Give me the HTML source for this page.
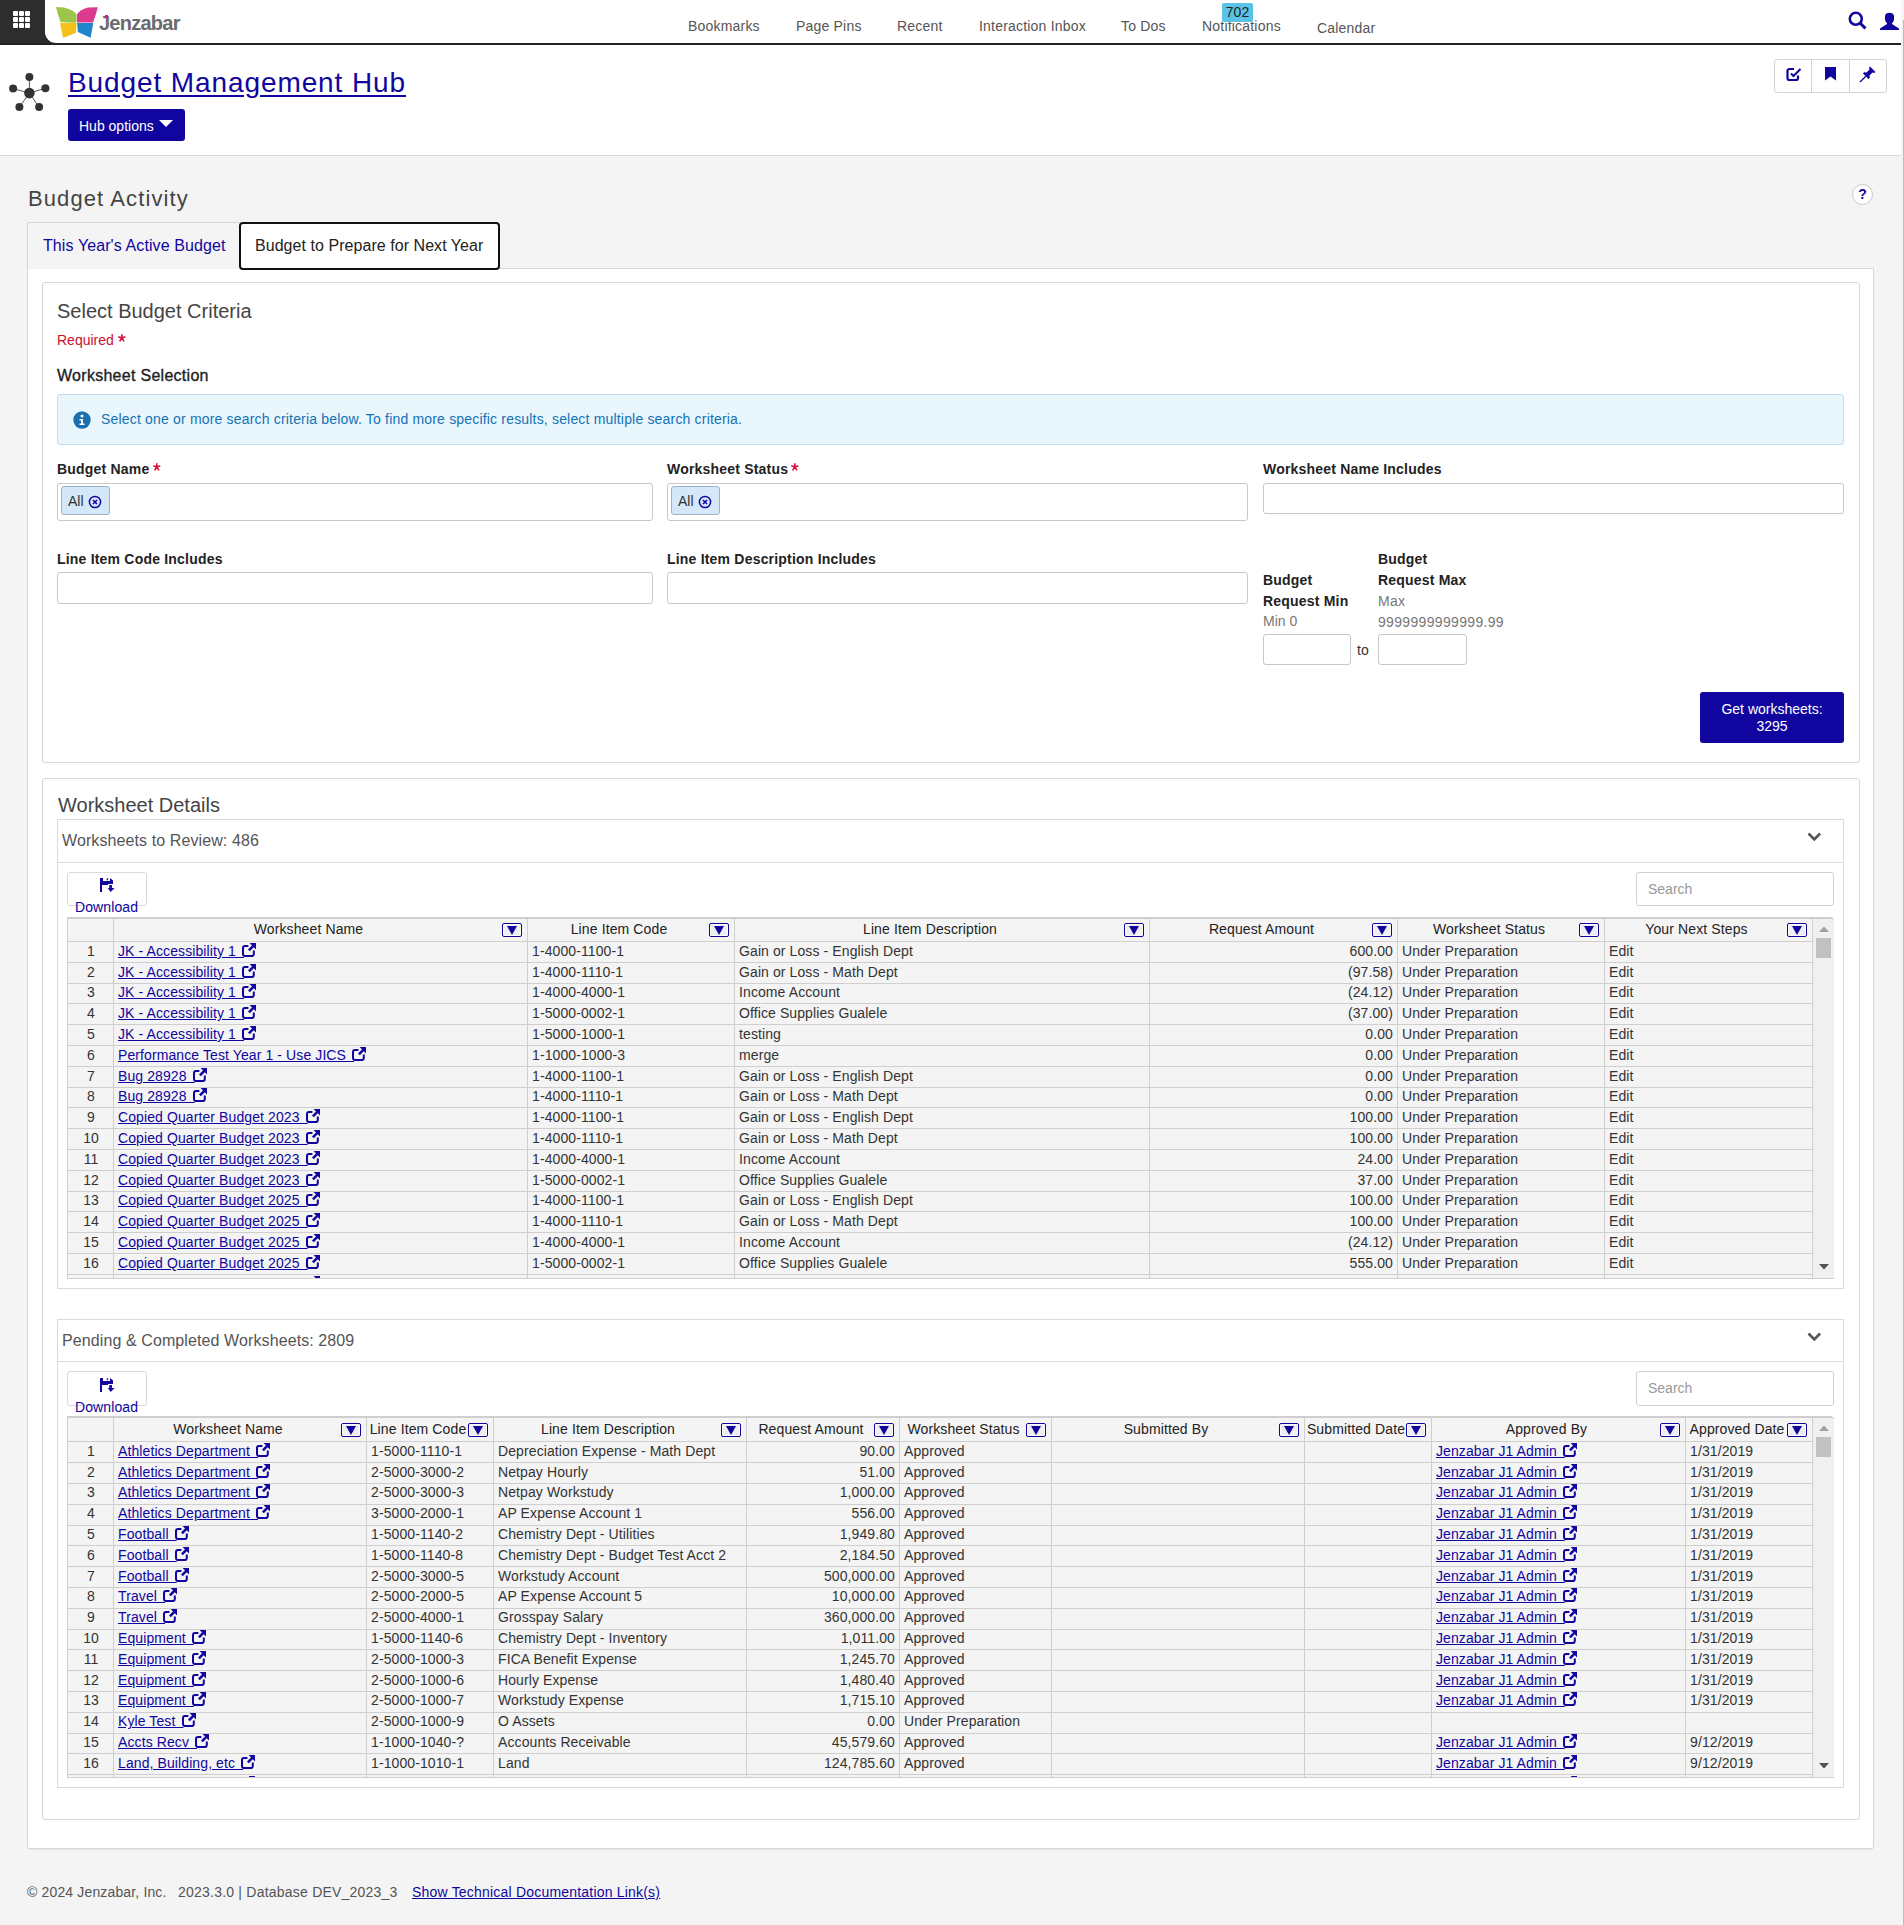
<!DOCTYPE html>
<html><head><meta charset="utf-8">
<style>
*{box-sizing:border-box}
html,body{margin:0;padding:0}
body{width:1904px;height:1925px;overflow:hidden;background:#f4f4f4;font-family:"Liberation Sans",sans-serif;font-size:14px;color:#222;position:relative}
.abs{position:absolute}
a{color:#10069f}
/* header */
#hdr{position:absolute;left:0;top:0;width:1901px;height:45px;background:#fff;border-bottom:2px solid #222}
#grid{position:absolute;left:0;top:0;width:56px;height:43px;background:#2d2d2d}
#gridw{position:absolute;left:45px;top:0;width:14px;height:43px;background:#fff;border-bottom-left-radius:11px}
#grid i{position:absolute;width:5px;height:5px;background:#fff;border-radius:1px}
.nav{position:absolute;top:18px;font-size:14px;color:#555;white-space:nowrap;letter-spacing:0.2px}
#hub{position:absolute;left:0;top:45px;width:1901px;height:111px;background:#fff;border-bottom:1px solid #d9d9d9}
.geo{font-family:"Liberation Sans",sans-serif}
.btn{background:#10069f;color:#fff;border-radius:3px}
.panel{position:absolute;background:#fff;border:1px solid #d6d6d6;border-radius:3px}
.lbl{position:absolute;font-weight:bold;font-size:14px;color:#222;white-space:nowrap;letter-spacing:0.2px}
.req{color:#c8102e}
.inp{position:absolute;background:#fff;border:1px solid #c8c8c8;border-radius:3px}
.chip{position:absolute;left:3px;top:2px;width:49px;height:29px;background:#d5e8fa;border:1px solid #9db3c9;border-radius:3px}
.gray{color:#777}
.sub{position:absolute;background:#fff;border:1px solid #dcdcdc}
.subhb{position:absolute;height:1px;background:#dcdcdc}
.subt{position:absolute;font-size:16px;color:#555;white-space:nowrap;letter-spacing:0.1px}
.dl{position:absolute;width:80px;height:34px;border:1px solid #d9d9d9;border-radius:3px;background:#fff}
.dlt{position:absolute;font-size:14px;color:#10069f;white-space:nowrap;letter-spacing:0.1px}
.srch{position:absolute;width:198px;height:34px;border:1px solid #d0d0d0;border-radius:3px;background:#fff;color:#999;font-size:14px;line-height:32px;padding-left:11px}
.grid{position:absolute;background:#f4f4f4;border-top:2px solid #cfcfcf;border-bottom:1px solid #cfcfcf;border-left:1px solid #cfcfcf;overflow:hidden;border-top-right-radius:4px}
.vl{position:absolute;top:0;bottom:0;width:1px;background:#cfcfcf}
.hl{position:absolute;left:0;right:21px;height:1px;background:#cfcfcf}
.hc{position:absolute;top:0;height:23px;line-height:23px;text-align:center;white-space:nowrap;color:#222;font-size:14px;letter-spacing:0.12px}
.filt{position:relative;width:20px;height:14px;border:1px solid #10069f;border-radius:2px;background:#eee;box-shadow:inset 0 0 0 1px #fff}
.rn{position:absolute;left:0;height:20.8px;line-height:17px;text-align:center;color:#333}
.c{position:absolute;height:20.8px;line-height:17px;white-space:nowrap;overflow:visible;color:#333;letter-spacing:0.1px}
.c a{color:#10069f;text-decoration:underline}
.ext{vertical-align:top;margin-top:0px;margin-left:-1.9px}
.sb{position:absolute;top:0;bottom:0;background:#f0f0f0;border-right:1px solid #d6d6d6}
</style></head><body>

<!-- HEADER -->
<div id="hdr">
  <div id="grid">
    <i style="left:13px;top:11px"></i><i style="left:19px;top:11px"></i><i style="left:25px;top:11px"></i>
    <i style="left:13px;top:17px"></i><i style="left:19px;top:17px"></i><i style="left:25px;top:17px"></i>
    <i style="left:13px;top:23px"></i><i style="left:19px;top:23px"></i><i style="left:25px;top:23px"></i>
  </div>
  <div id="gridw"></div>
  <svg class="abs" style="left:56px;top:6px" width="42" height="33" viewBox="0 0 42 33">
    
    <path d="M0 1 L8 1.5 Q18 4 20.5 8.5 L20.5 16.7 L4.7 16.2 Q1.5 8 0 1Z" fill="#9cc64a"/>
    <path d="M41.8 1.2 L32 1.5 Q24 3.5 21 8.5 L21 16.5 L37 16.5 Q40 9 41.8 1.2Z" fill="#dc3a8e"/>
    <path d="M4 17 L20.5 17 L20 27 L7 31.7Z" fill="#f5c01a"/>
    <path d="M21.2 17 L37.3 17 L34.6 31.7 L21.8 26Z" fill="#1f86cc"/>
  </svg>
  <div class="abs" style="left:99px;top:12px;font-size:20px;font-weight:bold;color:#6b6b6e;letter-spacing:-0.75px;white-space:nowrap">Jenzabar</div>
  <div class="abs" style="left:105px;top:15px;width:3px;height:3px;background:#e8177f"></div>

  <div class="nav" style="left:688px">Bookmarks</div>
  <div class="nav" style="left:796px">Page Pins</div>
  <div class="nav" style="left:897px">Recent</div>
  <div class="nav" style="left:979px">Interaction Inbox</div>
  <div class="nav" style="left:1121px">To Dos</div>
  <div class="nav" style="left:1202px">Notifications</div>
  <div class="abs" style="left:1222px;top:3px;width:31px;height:19px;background:#5bc2e7;border-radius:2px;font-size:14px;color:#222;text-align:center;line-height:19px">702</div>
  <div class="nav" style="left:1317px;top:20px">Calendar</div>

  <svg class="abs" style="left:1848px;top:11px" width="20" height="20" viewBox="0 0 20 20">
    <circle cx="7.8" cy="7.8" r="6" fill="none" stroke="#10069f" stroke-width="2.6"/>
    <path d="M12 12 L17.5 17.5" stroke="#10069f" stroke-width="3" stroke-linecap="butt"/>
  </svg>
  <svg class="abs" style="left:1879px;top:11px" width="21" height="20" viewBox="0 0 21 20">
    <path d="M6 5 C6 0.5 15 0.5 15 5 L15 8 C15 10 14 11.5 13 12 L13 13 L20 17.5 L20 19 L1 19 L1 17.5 L8 13 L8 12 C7 11.5 6 10 6 8Z" fill="#10069f"/>
  </svg>
</div>
<div class="abs" style="left:1903px;top:20px;width:1px;height:1905px;background:#bbb"></div>

<!-- HUB -->
<div id="hub">
  <svg class="abs" style="left:5px;top:23px" width="50" height="46" viewBox="0 0 50 46">
    <g stroke="#444" stroke-width="0.9">
      <line x1="24.4" y1="25.1" x2="24.4" y2="8.9"/><line x1="24.4" y1="25.1" x2="8.1" y2="20.5"/><line x1="24.4" y1="25.1" x2="40.4" y2="20.2"/>
      <line x1="24.4" y1="25.1" x2="14.4" y2="39.1"/><line x1="24.4" y1="25.1" x2="34.1" y2="39.1"/>
    </g>
    <g fill="#333"><circle cx="24.4" cy="25.1" r="5.3"/><circle cx="24.4" cy="8.9" r="4"/><circle cx="8.1" cy="20.5" r="4"/><circle cx="40.4" cy="20.2" r="4"/><circle cx="14.4" cy="39.1" r="4"/><circle cx="34.1" cy="39.1" r="4"/></g>
  </svg>
  <a class="abs geo" style="left:68px;top:22px;font-size:28px;letter-spacing:0.9px;white-space:nowrap;color:#10069f;text-decoration:underline;text-underline-offset:3px">Budget Management Hub</a>
  <div class="abs btn" style="left:68px;top:64px;width:117px;height:32px;font-size:14px;line-height:34px;padding-left:11px">Hub options<svg style="position:absolute;left:91px;top:11px" width="14" height="8" viewBox="0 0 14 8"><path d="M0 0 L14 0 L7 7Z" fill="#fff"/></svg></div>
  <div class="abs" style="left:1774px;top:14px;width:113px;height:34px;border:1px solid #d4d4d4;border-radius:3px;background:#fff"></div>
  <div class="abs" style="left:1811px;top:15px;width:1px;height:32px;background:#d4d4d4"></div>
  <div class="abs" style="left:1849px;top:15px;width:1px;height:32px;background:#d4d4d4"></div>
  <svg class="abs" style="left:1786px;top:22px" width="16" height="15" viewBox="0 0 16 15">
    <path d="M8 2 L3.5 2 Q1.5 2 1.5 4 L1.5 11 Q1.5 13 3.5 13 L10 13 Q12 13 12 11 L12 8.5" fill="none" stroke="#10069f" stroke-width="2.2"/>
    <path d="M5 6.5 L7.5 9 L14.5 2" fill="none" stroke="#10069f" stroke-width="2"/>
  </svg>
  <svg class="abs" style="left:1825px;top:22px" width="12" height="14" viewBox="0 0 12 14"><path d="M0 0 L11 0 L11 13.5 L5.5 9.5 L0 13.5Z" fill="#10069f"/></svg>
  <svg class="abs" style="left:1859px;top:21px" width="17" height="17" viewBox="0 0 17 17">
    <path d="M11 0.5 L16.5 6 L15 7 L13.5 6.5 L10.5 9.5 L10.8 12 L9.5 13 L4 7.5 L5 6.2 L7.5 6.5 L10.5 3.5 L10 2Z" fill="#10069f"/>
    <path d="M6.8 10.2 L1 16" stroke="#10069f" stroke-width="1.3"/>
  </svg>
</div>

<!-- BUDGET ACTIVITY -->
<div class="abs geo" style="left:28px;top:186px;font-size:22px;letter-spacing:1.1px;color:#444;white-space:nowrap">Budget Activity</div>
<div class="abs" style="left:1852px;top:184px;width:21px;height:21px;border:1px solid #c8c8c8;border-radius:50%;background:#fff;text-align:center;font-weight:bold;font-size:14px;line-height:19px;color:#10069f">?</div>

<!-- tab container -->
<div class="abs" style="left:27px;top:268px;width:1847px;height:1581px;background:#fff;border:1px solid #d6d6d6;border-bottom-left-radius:3px;border-bottom-right-radius:3px;box-shadow:0 1px 1px rgba(0,0,0,0.05)"></div>
<div class="abs" style="left:27px;top:222px;width:213px;height:47px;background:#f4f4f4;border:1px solid #d6d6d6;border-bottom:none;border-right-color:#e4e4e4;border-top-left-radius:3px"></div>
<div class="abs" style="left:43px;top:237px;font-size:16px;color:#10069f;white-space:nowrap;letter-spacing:0.1px">This Year's Active Budget</div>
<div class="abs" style="left:239px;top:222px;width:261px;height:48px;border:2px solid #111;border-radius:4px;background:#fff"></div>
<div class="abs" style="left:255px;top:237px;font-size:16px;color:#222;white-space:nowrap;letter-spacing:0.05px">Budget to Prepare for Next Year</div>

<!-- CRITERIA PANEL -->
<div class="panel" style="left:42px;top:282px;width:1818px;height:481px"></div>
<div class="abs geo" style="left:57px;top:300px;font-size:20px;color:#444;white-space:nowrap">Select Budget Criteria</div>
<div class="abs" style="left:57px;top:332px;font-size:14px;color:#c8102e;white-space:nowrap">Required</div><svg class="abs" style="left:118px;top:334px" width="8" height="8" viewBox="0 0 8 8"><path d="M3.8 4 V0.2 M3.8 3.9 L0.3 2.7 M3.8 3.9 L7.3 2.7 M3.8 3.9 L1.6 7.4 M3.8 3.9 L6 7.4" stroke="#d60f3c" stroke-width="1.6"/></svg>
<div class="abs geo" style="left:57px;top:367px;font-size:16px;color:#222;white-space:nowrap;letter-spacing:0.28px;-webkit-text-stroke:0.35px #222">Worksheet Selection</div>
<div class="abs" style="left:57px;top:394px;width:1787px;height:51px;background:#e9f6fc;border:1px solid #bfe0ef;border-radius:3px"></div>
<svg class="abs" style="left:73px;top:411px" width="18" height="18" viewBox="0 0 18 18"><circle cx="9" cy="9" r="8.7" fill="#1b6fae"/><circle cx="9" cy="5" r="1.5" fill="#fff"/><path d="M6.5 8 L10 8 L10 12.5 L11.5 12.5 L11.5 14 L6.5 14 L6.5 12.5 L8 12.5 L8 9.5 L6.5 9.5Z" fill="#fff"/></svg>
<div class="abs" style="left:101px;top:411px;font-size:14px;color:#1272b6;white-space:nowrap;letter-spacing:0.18px">Select one or more search criteria below. To find more specific results, select multiple search criteria.</div>

<div class="lbl" style="left:57px;top:461px">Budget Name</div><svg class="abs" style="left:152.5px;top:463px" width="8" height="8" viewBox="0 0 8 8"><path d="M3.8 4 V0.2 M3.8 3.9 L0.3 2.7 M3.8 3.9 L7.3 2.7 M3.8 3.9 L1.6 7.4 M3.8 3.9 L6 7.4" stroke="#d60f3c" stroke-width="1.6"/></svg>
<div class="inp" style="left:57px;top:483px;width:596px;height:38px"><div class="chip"><span class="abs" style="left:6px;top:6px;color:#333">All</span><svg class="abs" style="left:26px;top:8px" width="14" height="14" viewBox="0 0 14 14"><circle cx="7" cy="7" r="5.6" fill="none" stroke="#10069f" stroke-width="1.5"/><path d="M5 5 L9 9 M9 5 L5 9" stroke="#10069f" stroke-width="1.6"/></svg></div></div>
<div class="lbl" style="left:667px;top:461px">Worksheet Status</div><svg class="abs" style="left:791px;top:463px" width="8" height="8" viewBox="0 0 8 8"><path d="M3.8 4 V0.2 M3.8 3.9 L0.3 2.7 M3.8 3.9 L7.3 2.7 M3.8 3.9 L1.6 7.4 M3.8 3.9 L6 7.4" stroke="#d60f3c" stroke-width="1.6"/></svg>
<div class="inp" style="left:667px;top:483px;width:581px;height:38px"><div class="chip"><span class="abs" style="left:6px;top:6px;color:#333">All</span><svg class="abs" style="left:26px;top:8px" width="14" height="14" viewBox="0 0 14 14"><circle cx="7" cy="7" r="5.6" fill="none" stroke="#10069f" stroke-width="1.5"/><path d="M5 5 L9 9 M9 5 L5 9" stroke="#10069f" stroke-width="1.6"/></svg></div></div>
<div class="lbl" style="left:1263px;top:461px">Worksheet Name Includes</div>
<div class="inp" style="left:1263px;top:483px;width:581px;height:31px"></div>

<div class="lbl" style="left:57px;top:551px">Line Item Code Includes</div>
<div class="inp" style="left:57px;top:572px;width:596px;height:32px"></div>
<div class="lbl" style="left:667px;top:551px">Line Item Description Includes</div>
<div class="inp" style="left:667px;top:572px;width:581px;height:32px"></div>

<div class="lbl" style="left:1263px;top:570px;line-height:20.7px">Budget<br>Request Min</div>
<div class="abs gray" style="left:1263px;top:613px;white-space:nowrap">Min 0</div>
<div class="lbl" style="left:1378px;top:549px;line-height:20.7px">Budget<br>Request Max</div>
<div class="abs gray" style="left:1378px;top:591px;line-height:20.7px;white-space:nowrap;letter-spacing:0.33px">Max<br>9999999999999.99</div>
<div class="inp" style="left:1263px;top:634px;width:88px;height:31px"></div>
<div class="abs" style="left:1357px;top:642px;color:#333">to</div>
<div class="inp" style="left:1378px;top:634px;width:89px;height:31px"></div>

<div class="abs btn" style="left:1700px;top:692px;width:144px;height:51px;text-align:center;line-height:17px;padding-top:9px">Get worksheets:<br>3295</div>

<!-- DETAILS PANEL -->
<div class="panel" style="left:42px;top:778px;width:1818px;height:1042px"></div>
<div class="abs geo" style="left:58px;top:794px;font-size:20px;color:#444;white-space:nowrap">Worksheet Details</div>

<!--TABLE1-->
<div class="sub" style="left:57px;top:819px;width:1787px;height:470px"></div>
<div class="subhb" style="left:58px;top:862px;width:1785px"></div>
<div class="subt" style="left:62px;top:832px">Worksheets to Review: 486</div>
<svg style="position:absolute;left:1807px;top:832px" width="15" height="10" viewBox="0 0 15 10"><path d="M1.5 1.5 L7.3 7.3 L13.1 1.5" fill="none" stroke="#555" stroke-width="2.6"/></svg>
<div class="dl" style="left:67px;top:872px;height:34px"></div>
<svg style="position:absolute;left:100px;top:878px" width="15" height="15" viewBox="0 0 15 15"><path d="M0 0 H3 V3 H10 V0 L13 2.5 V6 H8 V7 H2 V14 H0Z" fill="#10069f"/><rect x="6.8" y="0.3" width="1.3" height="2" fill="#10069f"/><path d="M9.3 7 H11.9 V10 H14.7 L10.6 14 L7.8 10 H9.3Z" fill="#10069f"/></svg>
<div class="dlt" style="left:75px;top:899px">Download</div>
<div class="srch" style="left:1636px;top:872px;height:34px">Search</div>
<div class="grid" style="left:67px;top:917px;width:1767px;height:362px">
<div class="vl" style="left:45px"></div>
<div class="vl" style="left:459px"></div>
<div class="vl" style="left:666px"></div>
<div class="vl" style="left:1081px"></div>
<div class="vl" style="left:1329px"></div>
<div class="vl" style="left:1536px"></div>
<div class="vl" style="left:1744px"></div>
<div class="hl" style="top:22.0px"></div>
<div class="hl" style="top:42.8px"></div>
<div class="hl" style="top:63.6px"></div>
<div class="hl" style="top:84.4px"></div>
<div class="hl" style="top:105.2px"></div>
<div class="hl" style="top:126.0px"></div>
<div class="hl" style="top:146.8px"></div>
<div class="hl" style="top:167.6px"></div>
<div class="hl" style="top:188.4px"></div>
<div class="hl" style="top:209.2px"></div>
<div class="hl" style="top:230.0px"></div>
<div class="hl" style="top:250.8px"></div>
<div class="hl" style="top:271.6px"></div>
<div class="hl" style="top:292.4px"></div>
<div class="hl" style="top:313.2px"></div>
<div class="hl" style="top:334.0px"></div>
<div class="hl" style="top:354.8px"></div>
<div class="hc" style="top:-1px;left:46px;width:389px;height:22.0px;line-height:22.0px">Worksheet Name</div>
<div style="position:absolute;left:434px;top:3.7px"><div class="filt"><svg width="10" height="9" viewBox="0 0 10 9" style="position:absolute;left:4px;top:2px"><path d="M0 0 H10 L5 9Z" fill="#10069f"/></svg></div></div>
<div class="hc" style="top:-1px;left:460px;width:182px;height:22.0px;line-height:22.0px">Line Item Code</div>
<div style="position:absolute;left:641px;top:3.7px"><div class="filt"><svg width="10" height="9" viewBox="0 0 10 9" style="position:absolute;left:4px;top:2px"><path d="M0 0 H10 L5 9Z" fill="#10069f"/></svg></div></div>
<div class="hc" style="top:-1px;left:667px;width:390px;height:22.0px;line-height:22.0px">Line Item Description</div>
<div style="position:absolute;left:1056px;top:3.7px"><div class="filt"><svg width="10" height="9" viewBox="0 0 10 9" style="position:absolute;left:4px;top:2px"><path d="M0 0 H10 L5 9Z" fill="#10069f"/></svg></div></div>
<div class="hc" style="top:-1px;left:1082px;width:223px;height:22.0px;line-height:22.0px">Request Amount</div>
<div style="position:absolute;left:1304px;top:3.7px"><div class="filt"><svg width="10" height="9" viewBox="0 0 10 9" style="position:absolute;left:4px;top:2px"><path d="M0 0 H10 L5 9Z" fill="#10069f"/></svg></div></div>
<div class="hc" style="top:-1px;left:1330px;width:182px;height:22.0px;line-height:22.0px">Worksheet Status</div>
<div style="position:absolute;left:1511px;top:3.7px"><div class="filt"><svg width="10" height="9" viewBox="0 0 10 9" style="position:absolute;left:4px;top:2px"><path d="M0 0 H10 L5 9Z" fill="#10069f"/></svg></div></div>
<div class="hc" style="top:-1px;left:1537px;width:183px;height:22.0px;line-height:22.0px">Your Next Steps</div>
<div style="position:absolute;left:1719px;top:3.7px"><div class="filt"><svg width="10" height="9" viewBox="0 0 10 9" style="position:absolute;left:4px;top:2px"><path d="M0 0 H10 L5 9Z" fill="#10069f"/></svg></div></div>
<div class="rn" style="top:23.8px;width:46px">1</div>
<div class="c" style="top:23.8px;left:50px;width:409px"><a>JK - Accessibility 1&nbsp; </a><svg class="ext" width="14" height="14" viewBox="0 0 14 14"><path d="M6.4 2.9 H3 Q1 2.9 1 4.9 V11.1 Q1 13.1 3 13.1 H9.8 Q11.8 13.1 11.8 11.1 V7.6" fill="none" stroke="#10069f" stroke-width="2"/><path d="M6.9 7.3 L11.6 2.6" stroke="#10069f" stroke-width="2.6"/><path d="M7.6 0 H14 V6.4Z" fill="#10069f"/></svg></div>
<div class="c" style="top:23.8px;left:464px;width:202px">1-4000-1100-1</div>
<div class="c" style="top:23.8px;left:671px;width:410px">Gain or Loss - English Dept</div>
<div class="c" style="top:23.8px;left:1082px;width:243px;text-align:right">600.00</div>
<div class="c" style="top:23.8px;left:1334px;width:202px">Under Preparation</div>
<div class="c" style="top:23.8px;left:1541px;width:203px">Edit</div>
<div class="rn" style="top:44.6px;width:46px">2</div>
<div class="c" style="top:44.6px;left:50px;width:409px"><a>JK - Accessibility 1&nbsp; </a><svg class="ext" width="14" height="14" viewBox="0 0 14 14"><path d="M6.4 2.9 H3 Q1 2.9 1 4.9 V11.1 Q1 13.1 3 13.1 H9.8 Q11.8 13.1 11.8 11.1 V7.6" fill="none" stroke="#10069f" stroke-width="2"/><path d="M6.9 7.3 L11.6 2.6" stroke="#10069f" stroke-width="2.6"/><path d="M7.6 0 H14 V6.4Z" fill="#10069f"/></svg></div>
<div class="c" style="top:44.6px;left:464px;width:202px">1-4000-1110-1</div>
<div class="c" style="top:44.6px;left:671px;width:410px">Gain or Loss - Math Dept</div>
<div class="c" style="top:44.6px;left:1082px;width:243px;text-align:right">(97.58)</div>
<div class="c" style="top:44.6px;left:1334px;width:202px">Under Preparation</div>
<div class="c" style="top:44.6px;left:1541px;width:203px">Edit</div>
<div class="rn" style="top:65.4px;width:46px">3</div>
<div class="c" style="top:65.4px;left:50px;width:409px"><a>JK - Accessibility 1&nbsp; </a><svg class="ext" width="14" height="14" viewBox="0 0 14 14"><path d="M6.4 2.9 H3 Q1 2.9 1 4.9 V11.1 Q1 13.1 3 13.1 H9.8 Q11.8 13.1 11.8 11.1 V7.6" fill="none" stroke="#10069f" stroke-width="2"/><path d="M6.9 7.3 L11.6 2.6" stroke="#10069f" stroke-width="2.6"/><path d="M7.6 0 H14 V6.4Z" fill="#10069f"/></svg></div>
<div class="c" style="top:65.4px;left:464px;width:202px">1-4000-4000-1</div>
<div class="c" style="top:65.4px;left:671px;width:410px">Income Account</div>
<div class="c" style="top:65.4px;left:1082px;width:243px;text-align:right">(24.12)</div>
<div class="c" style="top:65.4px;left:1334px;width:202px">Under Preparation</div>
<div class="c" style="top:65.4px;left:1541px;width:203px">Edit</div>
<div class="rn" style="top:86.2px;width:46px">4</div>
<div class="c" style="top:86.2px;left:50px;width:409px"><a>JK - Accessibility 1&nbsp; </a><svg class="ext" width="14" height="14" viewBox="0 0 14 14"><path d="M6.4 2.9 H3 Q1 2.9 1 4.9 V11.1 Q1 13.1 3 13.1 H9.8 Q11.8 13.1 11.8 11.1 V7.6" fill="none" stroke="#10069f" stroke-width="2"/><path d="M6.9 7.3 L11.6 2.6" stroke="#10069f" stroke-width="2.6"/><path d="M7.6 0 H14 V6.4Z" fill="#10069f"/></svg></div>
<div class="c" style="top:86.2px;left:464px;width:202px">1-5000-0002-1</div>
<div class="c" style="top:86.2px;left:671px;width:410px">Office Supplies Gualele</div>
<div class="c" style="top:86.2px;left:1082px;width:243px;text-align:right">(37.00)</div>
<div class="c" style="top:86.2px;left:1334px;width:202px">Under Preparation</div>
<div class="c" style="top:86.2px;left:1541px;width:203px">Edit</div>
<div class="rn" style="top:107.0px;width:46px">5</div>
<div class="c" style="top:107.0px;left:50px;width:409px"><a>JK - Accessibility 1&nbsp; </a><svg class="ext" width="14" height="14" viewBox="0 0 14 14"><path d="M6.4 2.9 H3 Q1 2.9 1 4.9 V11.1 Q1 13.1 3 13.1 H9.8 Q11.8 13.1 11.8 11.1 V7.6" fill="none" stroke="#10069f" stroke-width="2"/><path d="M6.9 7.3 L11.6 2.6" stroke="#10069f" stroke-width="2.6"/><path d="M7.6 0 H14 V6.4Z" fill="#10069f"/></svg></div>
<div class="c" style="top:107.0px;left:464px;width:202px">1-5000-1000-1</div>
<div class="c" style="top:107.0px;left:671px;width:410px">testing</div>
<div class="c" style="top:107.0px;left:1082px;width:243px;text-align:right">0.00</div>
<div class="c" style="top:107.0px;left:1334px;width:202px">Under Preparation</div>
<div class="c" style="top:107.0px;left:1541px;width:203px">Edit</div>
<div class="rn" style="top:127.8px;width:46px">6</div>
<div class="c" style="top:127.8px;left:50px;width:409px"><a>Performance Test Year 1 - Use JICS&nbsp; </a><svg class="ext" width="14" height="14" viewBox="0 0 14 14"><path d="M6.4 2.9 H3 Q1 2.9 1 4.9 V11.1 Q1 13.1 3 13.1 H9.8 Q11.8 13.1 11.8 11.1 V7.6" fill="none" stroke="#10069f" stroke-width="2"/><path d="M6.9 7.3 L11.6 2.6" stroke="#10069f" stroke-width="2.6"/><path d="M7.6 0 H14 V6.4Z" fill="#10069f"/></svg></div>
<div class="c" style="top:127.8px;left:464px;width:202px">1-1000-1000-3</div>
<div class="c" style="top:127.8px;left:671px;width:410px">merge</div>
<div class="c" style="top:127.8px;left:1082px;width:243px;text-align:right">0.00</div>
<div class="c" style="top:127.8px;left:1334px;width:202px">Under Preparation</div>
<div class="c" style="top:127.8px;left:1541px;width:203px">Edit</div>
<div class="rn" style="top:148.6px;width:46px">7</div>
<div class="c" style="top:148.6px;left:50px;width:409px"><a>Bug 28928&nbsp; </a><svg class="ext" width="14" height="14" viewBox="0 0 14 14"><path d="M6.4 2.9 H3 Q1 2.9 1 4.9 V11.1 Q1 13.1 3 13.1 H9.8 Q11.8 13.1 11.8 11.1 V7.6" fill="none" stroke="#10069f" stroke-width="2"/><path d="M6.9 7.3 L11.6 2.6" stroke="#10069f" stroke-width="2.6"/><path d="M7.6 0 H14 V6.4Z" fill="#10069f"/></svg></div>
<div class="c" style="top:148.6px;left:464px;width:202px">1-4000-1100-1</div>
<div class="c" style="top:148.6px;left:671px;width:410px">Gain or Loss - English Dept</div>
<div class="c" style="top:148.6px;left:1082px;width:243px;text-align:right">0.00</div>
<div class="c" style="top:148.6px;left:1334px;width:202px">Under Preparation</div>
<div class="c" style="top:148.6px;left:1541px;width:203px">Edit</div>
<div class="rn" style="top:169.4px;width:46px">8</div>
<div class="c" style="top:169.4px;left:50px;width:409px"><a>Bug 28928&nbsp; </a><svg class="ext" width="14" height="14" viewBox="0 0 14 14"><path d="M6.4 2.9 H3 Q1 2.9 1 4.9 V11.1 Q1 13.1 3 13.1 H9.8 Q11.8 13.1 11.8 11.1 V7.6" fill="none" stroke="#10069f" stroke-width="2"/><path d="M6.9 7.3 L11.6 2.6" stroke="#10069f" stroke-width="2.6"/><path d="M7.6 0 H14 V6.4Z" fill="#10069f"/></svg></div>
<div class="c" style="top:169.4px;left:464px;width:202px">1-4000-1110-1</div>
<div class="c" style="top:169.4px;left:671px;width:410px">Gain or Loss - Math Dept</div>
<div class="c" style="top:169.4px;left:1082px;width:243px;text-align:right">0.00</div>
<div class="c" style="top:169.4px;left:1334px;width:202px">Under Preparation</div>
<div class="c" style="top:169.4px;left:1541px;width:203px">Edit</div>
<div class="rn" style="top:190.2px;width:46px">9</div>
<div class="c" style="top:190.2px;left:50px;width:409px"><a>Copied Quarter Budget 2023&nbsp; </a><svg class="ext" width="14" height="14" viewBox="0 0 14 14"><path d="M6.4 2.9 H3 Q1 2.9 1 4.9 V11.1 Q1 13.1 3 13.1 H9.8 Q11.8 13.1 11.8 11.1 V7.6" fill="none" stroke="#10069f" stroke-width="2"/><path d="M6.9 7.3 L11.6 2.6" stroke="#10069f" stroke-width="2.6"/><path d="M7.6 0 H14 V6.4Z" fill="#10069f"/></svg></div>
<div class="c" style="top:190.2px;left:464px;width:202px">1-4000-1100-1</div>
<div class="c" style="top:190.2px;left:671px;width:410px">Gain or Loss - English Dept</div>
<div class="c" style="top:190.2px;left:1082px;width:243px;text-align:right">100.00</div>
<div class="c" style="top:190.2px;left:1334px;width:202px">Under Preparation</div>
<div class="c" style="top:190.2px;left:1541px;width:203px">Edit</div>
<div class="rn" style="top:211.0px;width:46px">10</div>
<div class="c" style="top:211.0px;left:50px;width:409px"><a>Copied Quarter Budget 2023&nbsp; </a><svg class="ext" width="14" height="14" viewBox="0 0 14 14"><path d="M6.4 2.9 H3 Q1 2.9 1 4.9 V11.1 Q1 13.1 3 13.1 H9.8 Q11.8 13.1 11.8 11.1 V7.6" fill="none" stroke="#10069f" stroke-width="2"/><path d="M6.9 7.3 L11.6 2.6" stroke="#10069f" stroke-width="2.6"/><path d="M7.6 0 H14 V6.4Z" fill="#10069f"/></svg></div>
<div class="c" style="top:211.0px;left:464px;width:202px">1-4000-1110-1</div>
<div class="c" style="top:211.0px;left:671px;width:410px">Gain or Loss - Math Dept</div>
<div class="c" style="top:211.0px;left:1082px;width:243px;text-align:right">100.00</div>
<div class="c" style="top:211.0px;left:1334px;width:202px">Under Preparation</div>
<div class="c" style="top:211.0px;left:1541px;width:203px">Edit</div>
<div class="rn" style="top:231.8px;width:46px">11</div>
<div class="c" style="top:231.8px;left:50px;width:409px"><a>Copied Quarter Budget 2023&nbsp; </a><svg class="ext" width="14" height="14" viewBox="0 0 14 14"><path d="M6.4 2.9 H3 Q1 2.9 1 4.9 V11.1 Q1 13.1 3 13.1 H9.8 Q11.8 13.1 11.8 11.1 V7.6" fill="none" stroke="#10069f" stroke-width="2"/><path d="M6.9 7.3 L11.6 2.6" stroke="#10069f" stroke-width="2.6"/><path d="M7.6 0 H14 V6.4Z" fill="#10069f"/></svg></div>
<div class="c" style="top:231.8px;left:464px;width:202px">1-4000-4000-1</div>
<div class="c" style="top:231.8px;left:671px;width:410px">Income Account</div>
<div class="c" style="top:231.8px;left:1082px;width:243px;text-align:right">24.00</div>
<div class="c" style="top:231.8px;left:1334px;width:202px">Under Preparation</div>
<div class="c" style="top:231.8px;left:1541px;width:203px">Edit</div>
<div class="rn" style="top:252.6px;width:46px">12</div>
<div class="c" style="top:252.6px;left:50px;width:409px"><a>Copied Quarter Budget 2023&nbsp; </a><svg class="ext" width="14" height="14" viewBox="0 0 14 14"><path d="M6.4 2.9 H3 Q1 2.9 1 4.9 V11.1 Q1 13.1 3 13.1 H9.8 Q11.8 13.1 11.8 11.1 V7.6" fill="none" stroke="#10069f" stroke-width="2"/><path d="M6.9 7.3 L11.6 2.6" stroke="#10069f" stroke-width="2.6"/><path d="M7.6 0 H14 V6.4Z" fill="#10069f"/></svg></div>
<div class="c" style="top:252.6px;left:464px;width:202px">1-5000-0002-1</div>
<div class="c" style="top:252.6px;left:671px;width:410px">Office Supplies Gualele</div>
<div class="c" style="top:252.6px;left:1082px;width:243px;text-align:right">37.00</div>
<div class="c" style="top:252.6px;left:1334px;width:202px">Under Preparation</div>
<div class="c" style="top:252.6px;left:1541px;width:203px">Edit</div>
<div class="rn" style="top:273.4px;width:46px">13</div>
<div class="c" style="top:273.4px;left:50px;width:409px"><a>Copied Quarter Budget 2025&nbsp; </a><svg class="ext" width="14" height="14" viewBox="0 0 14 14"><path d="M6.4 2.9 H3 Q1 2.9 1 4.9 V11.1 Q1 13.1 3 13.1 H9.8 Q11.8 13.1 11.8 11.1 V7.6" fill="none" stroke="#10069f" stroke-width="2"/><path d="M6.9 7.3 L11.6 2.6" stroke="#10069f" stroke-width="2.6"/><path d="M7.6 0 H14 V6.4Z" fill="#10069f"/></svg></div>
<div class="c" style="top:273.4px;left:464px;width:202px">1-4000-1100-1</div>
<div class="c" style="top:273.4px;left:671px;width:410px">Gain or Loss - English Dept</div>
<div class="c" style="top:273.4px;left:1082px;width:243px;text-align:right">100.00</div>
<div class="c" style="top:273.4px;left:1334px;width:202px">Under Preparation</div>
<div class="c" style="top:273.4px;left:1541px;width:203px">Edit</div>
<div class="rn" style="top:294.2px;width:46px">14</div>
<div class="c" style="top:294.2px;left:50px;width:409px"><a>Copied Quarter Budget 2025&nbsp; </a><svg class="ext" width="14" height="14" viewBox="0 0 14 14"><path d="M6.4 2.9 H3 Q1 2.9 1 4.9 V11.1 Q1 13.1 3 13.1 H9.8 Q11.8 13.1 11.8 11.1 V7.6" fill="none" stroke="#10069f" stroke-width="2"/><path d="M6.9 7.3 L11.6 2.6" stroke="#10069f" stroke-width="2.6"/><path d="M7.6 0 H14 V6.4Z" fill="#10069f"/></svg></div>
<div class="c" style="top:294.2px;left:464px;width:202px">1-4000-1110-1</div>
<div class="c" style="top:294.2px;left:671px;width:410px">Gain or Loss - Math Dept</div>
<div class="c" style="top:294.2px;left:1082px;width:243px;text-align:right">100.00</div>
<div class="c" style="top:294.2px;left:1334px;width:202px">Under Preparation</div>
<div class="c" style="top:294.2px;left:1541px;width:203px">Edit</div>
<div class="rn" style="top:315.0px;width:46px">15</div>
<div class="c" style="top:315.0px;left:50px;width:409px"><a>Copied Quarter Budget 2025&nbsp; </a><svg class="ext" width="14" height="14" viewBox="0 0 14 14"><path d="M6.4 2.9 H3 Q1 2.9 1 4.9 V11.1 Q1 13.1 3 13.1 H9.8 Q11.8 13.1 11.8 11.1 V7.6" fill="none" stroke="#10069f" stroke-width="2"/><path d="M6.9 7.3 L11.6 2.6" stroke="#10069f" stroke-width="2.6"/><path d="M7.6 0 H14 V6.4Z" fill="#10069f"/></svg></div>
<div class="c" style="top:315.0px;left:464px;width:202px">1-4000-4000-1</div>
<div class="c" style="top:315.0px;left:671px;width:410px">Income Account</div>
<div class="c" style="top:315.0px;left:1082px;width:243px;text-align:right">(24.12)</div>
<div class="c" style="top:315.0px;left:1334px;width:202px">Under Preparation</div>
<div class="c" style="top:315.0px;left:1541px;width:203px">Edit</div>
<div class="rn" style="top:335.8px;width:46px">16</div>
<div class="c" style="top:335.8px;left:50px;width:409px"><a>Copied Quarter Budget 2025&nbsp; </a><svg class="ext" width="14" height="14" viewBox="0 0 14 14"><path d="M6.4 2.9 H3 Q1 2.9 1 4.9 V11.1 Q1 13.1 3 13.1 H9.8 Q11.8 13.1 11.8 11.1 V7.6" fill="none" stroke="#10069f" stroke-width="2"/><path d="M6.9 7.3 L11.6 2.6" stroke="#10069f" stroke-width="2.6"/><path d="M7.6 0 H14 V6.4Z" fill="#10069f"/></svg></div>
<div class="c" style="top:335.8px;left:464px;width:202px">1-5000-0002-1</div>
<div class="c" style="top:335.8px;left:671px;width:410px">Office Supplies Gualele</div>
<div class="c" style="top:335.8px;left:1082px;width:243px;text-align:right">555.00</div>
<div class="c" style="top:335.8px;left:1334px;width:202px">Under Preparation</div>
<div class="c" style="top:335.8px;left:1541px;width:203px">Edit</div>
<div class="rn" style="top:356.6px;width:46px"></div>
<div class="c" style="top:356.6px;left:50px;width:409px"><a>Copied Quarter Budget 2025&nbsp; </a><svg class="ext" width="14" height="14" viewBox="0 0 14 14"><path d="M6.4 2.9 H3 Q1 2.9 1 4.9 V11.1 Q1 13.1 3 13.1 H9.8 Q11.8 13.1 11.8 11.1 V7.6" fill="none" stroke="#10069f" stroke-width="2"/><path d="M6.9 7.3 L11.6 2.6" stroke="#10069f" stroke-width="2.6"/><path d="M7.6 0 H14 V6.4Z" fill="#10069f"/></svg></div>
<div class="c" style="top:356.6px;left:464px;width:202px">1-5000-1000-1</div>
<div class="c" style="top:356.6px;left:671px;width:410px">testing</div>
<div class="c" style="top:356.6px;left:1082px;width:243px;text-align:right">0.00</div>
<div class="c" style="top:356.6px;left:1334px;width:202px">Under Preparation</div>
<div class="c" style="top:356.6px;left:1541px;width:203px">Edit</div>
<div class="sb" style="left:1745px;width:22px"></div>
<svg style="position:absolute;left:1751px;top:7px" width="10" height="6" viewBox="0 0 10 6"><path d="M0 6 L5 0.5 L10 6Z" fill="#a0a0a0"/></svg>
<div style="position:absolute;left:1748px;top:19px;width:15px;height:20px;background:#c1c1c1"></div>
<svg style="position:absolute;left:1751px;top:345px" width="10" height="6" viewBox="0 0 10 6"><path d="M0 0 L10 0 L5 5.5Z" fill="#505050"/></svg>
</div>
<!--/TABLE1-->

<!--TABLE2-->
<div class="sub" style="left:57px;top:1319px;width:1787px;height:469px"></div>
<div class="subhb" style="left:58px;top:1361px;width:1785px"></div>
<div class="subt" style="left:62px;top:1332px">Pending &amp; Completed Worksheets: 2809</div>
<svg style="position:absolute;left:1807px;top:1332px" width="15" height="10" viewBox="0 0 15 10"><path d="M1.5 1.5 L7.3 7.3 L13.1 1.5" fill="none" stroke="#555" stroke-width="2.6"/></svg>
<div class="dl" style="left:67px;top:1371px;height:35px"></div>
<svg style="position:absolute;left:100px;top:1378px" width="15" height="15" viewBox="0 0 15 15"><path d="M0 0 H3 V3 H10 V0 L13 2.5 V6 H8 V7 H2 V14 H0Z" fill="#10069f"/><rect x="6.8" y="0.3" width="1.3" height="2" fill="#10069f"/><path d="M9.3 7 H11.9 V10 H14.7 L10.6 14 L7.8 10 H9.3Z" fill="#10069f"/></svg>
<div class="dlt" style="left:75px;top:1399px">Download</div>
<div class="srch" style="left:1636px;top:1371px;height:35px">Search</div>
<div class="grid" style="left:67px;top:1416px;width:1767px;height:362px">
<div class="vl" style="left:45px"></div>
<div class="vl" style="left:298px"></div>
<div class="vl" style="left:425px"></div>
<div class="vl" style="left:678px"></div>
<div class="vl" style="left:831px"></div>
<div class="vl" style="left:983px"></div>
<div class="vl" style="left:1236px"></div>
<div class="vl" style="left:1363px"></div>
<div class="vl" style="left:1617px"></div>
<div class="vl" style="left:1744px"></div>
<div class="hl" style="top:23.3px"></div>
<div class="hl" style="top:44.1px"></div>
<div class="hl" style="top:64.9px"></div>
<div class="hl" style="top:85.7px"></div>
<div class="hl" style="top:106.5px"></div>
<div class="hl" style="top:127.3px"></div>
<div class="hl" style="top:148.1px"></div>
<div class="hl" style="top:168.9px"></div>
<div class="hl" style="top:189.7px"></div>
<div class="hl" style="top:210.5px"></div>
<div class="hl" style="top:231.3px"></div>
<div class="hl" style="top:252.1px"></div>
<div class="hl" style="top:272.9px"></div>
<div class="hl" style="top:293.7px"></div>
<div class="hl" style="top:314.5px"></div>
<div class="hl" style="top:335.3px"></div>
<div class="hl" style="top:356.1px"></div>
<div class="hc" style="top:0px;left:46px;width:228px;height:23.3px;line-height:23.3px">Worksheet Name</div>
<div style="position:absolute;left:273px;top:5.0px"><div class="filt"><svg width="10" height="9" viewBox="0 0 10 9" style="position:absolute;left:4px;top:2px"><path d="M0 0 H10 L5 9Z" fill="#10069f"/></svg></div></div>
<div class="hc" style="top:0px;left:299px;width:102px;height:23.3px;line-height:23.3px">Line Item Code</div>
<div style="position:absolute;left:400px;top:5.0px"><div class="filt"><svg width="10" height="9" viewBox="0 0 10 9" style="position:absolute;left:4px;top:2px"><path d="M0 0 H10 L5 9Z" fill="#10069f"/></svg></div></div>
<div class="hc" style="top:0px;left:426px;width:228px;height:23.3px;line-height:23.3px">Line Item Description</div>
<div style="position:absolute;left:653px;top:5.0px"><div class="filt"><svg width="10" height="9" viewBox="0 0 10 9" style="position:absolute;left:4px;top:2px"><path d="M0 0 H10 L5 9Z" fill="#10069f"/></svg></div></div>
<div class="hc" style="top:0px;left:679px;width:128px;height:23.3px;line-height:23.3px">Request Amount</div>
<div style="position:absolute;left:806px;top:5.0px"><div class="filt"><svg width="10" height="9" viewBox="0 0 10 9" style="position:absolute;left:4px;top:2px"><path d="M0 0 H10 L5 9Z" fill="#10069f"/></svg></div></div>
<div class="hc" style="top:0px;left:832px;width:127px;height:23.3px;line-height:23.3px">Worksheet Status</div>
<div style="position:absolute;left:958px;top:5.0px"><div class="filt"><svg width="10" height="9" viewBox="0 0 10 9" style="position:absolute;left:4px;top:2px"><path d="M0 0 H10 L5 9Z" fill="#10069f"/></svg></div></div>
<div class="hc" style="top:0px;left:984px;width:228px;height:23.3px;line-height:23.3px">Submitted By</div>
<div style="position:absolute;left:1211px;top:5.0px"><div class="filt"><svg width="10" height="9" viewBox="0 0 10 9" style="position:absolute;left:4px;top:2px"><path d="M0 0 H10 L5 9Z" fill="#10069f"/></svg></div></div>
<div class="hc" style="top:0px;left:1237px;width:102px;height:23.3px;line-height:23.3px">Submitted Date</div>
<div style="position:absolute;left:1338px;top:5.0px"><div class="filt"><svg width="10" height="9" viewBox="0 0 10 9" style="position:absolute;left:4px;top:2px"><path d="M0 0 H10 L5 9Z" fill="#10069f"/></svg></div></div>
<div class="hc" style="top:0px;left:1364px;width:229px;height:23.3px;line-height:23.3px">Approved By</div>
<div style="position:absolute;left:1592px;top:5.0px"><div class="filt"><svg width="10" height="9" viewBox="0 0 10 9" style="position:absolute;left:4px;top:2px"><path d="M0 0 H10 L5 9Z" fill="#10069f"/></svg></div></div>
<div class="hc" style="top:0px;left:1618px;width:102px;height:23.3px;line-height:23.3px">Approved Date</div>
<div style="position:absolute;left:1719px;top:5.0px"><div class="filt"><svg width="10" height="9" viewBox="0 0 10 9" style="position:absolute;left:4px;top:2px"><path d="M0 0 H10 L5 9Z" fill="#10069f"/></svg></div></div>
<div class="rn" style="top:24.8px;width:46px">1</div>
<div class="c" style="top:24.8px;left:50px;width:248px"><a>Athletics Department&nbsp; </a><svg class="ext" width="14" height="14" viewBox="0 0 14 14"><path d="M6.4 2.9 H3 Q1 2.9 1 4.9 V11.1 Q1 13.1 3 13.1 H9.8 Q11.8 13.1 11.8 11.1 V7.6" fill="none" stroke="#10069f" stroke-width="2"/><path d="M6.9 7.3 L11.6 2.6" stroke="#10069f" stroke-width="2.6"/><path d="M7.6 0 H14 V6.4Z" fill="#10069f"/></svg></div>
<div class="c" style="top:24.8px;left:303px;width:122px">1-5000-1110-1</div>
<div class="c" style="top:24.8px;left:430px;width:248px">Depreciation Expense - Math Dept</div>
<div class="c" style="top:24.8px;left:679px;width:148px;text-align:right">90.00</div>
<div class="c" style="top:24.8px;left:836px;width:147px">Approved</div>
<div class="c" style="top:24.8px;left:1368px;width:249px"><a>Jenzabar J1 Admin&nbsp; </a><svg class="ext" width="14" height="14" viewBox="0 0 14 14"><path d="M6.4 2.9 H3 Q1 2.9 1 4.9 V11.1 Q1 13.1 3 13.1 H9.8 Q11.8 13.1 11.8 11.1 V7.6" fill="none" stroke="#10069f" stroke-width="2"/><path d="M6.9 7.3 L11.6 2.6" stroke="#10069f" stroke-width="2.6"/><path d="M7.6 0 H14 V6.4Z" fill="#10069f"/></svg></div>
<div class="c" style="top:24.8px;left:1622px;width:122px">1/31/2019</div>
<div class="rn" style="top:45.6px;width:46px">2</div>
<div class="c" style="top:45.6px;left:50px;width:248px"><a>Athletics Department&nbsp; </a><svg class="ext" width="14" height="14" viewBox="0 0 14 14"><path d="M6.4 2.9 H3 Q1 2.9 1 4.9 V11.1 Q1 13.1 3 13.1 H9.8 Q11.8 13.1 11.8 11.1 V7.6" fill="none" stroke="#10069f" stroke-width="2"/><path d="M6.9 7.3 L11.6 2.6" stroke="#10069f" stroke-width="2.6"/><path d="M7.6 0 H14 V6.4Z" fill="#10069f"/></svg></div>
<div class="c" style="top:45.6px;left:303px;width:122px">2-5000-3000-2</div>
<div class="c" style="top:45.6px;left:430px;width:248px">Netpay Hourly</div>
<div class="c" style="top:45.6px;left:679px;width:148px;text-align:right">51.00</div>
<div class="c" style="top:45.6px;left:836px;width:147px">Approved</div>
<div class="c" style="top:45.6px;left:1368px;width:249px"><a>Jenzabar J1 Admin&nbsp; </a><svg class="ext" width="14" height="14" viewBox="0 0 14 14"><path d="M6.4 2.9 H3 Q1 2.9 1 4.9 V11.1 Q1 13.1 3 13.1 H9.8 Q11.8 13.1 11.8 11.1 V7.6" fill="none" stroke="#10069f" stroke-width="2"/><path d="M6.9 7.3 L11.6 2.6" stroke="#10069f" stroke-width="2.6"/><path d="M7.6 0 H14 V6.4Z" fill="#10069f"/></svg></div>
<div class="c" style="top:45.6px;left:1622px;width:122px">1/31/2019</div>
<div class="rn" style="top:66.4px;width:46px">3</div>
<div class="c" style="top:66.4px;left:50px;width:248px"><a>Athletics Department&nbsp; </a><svg class="ext" width="14" height="14" viewBox="0 0 14 14"><path d="M6.4 2.9 H3 Q1 2.9 1 4.9 V11.1 Q1 13.1 3 13.1 H9.8 Q11.8 13.1 11.8 11.1 V7.6" fill="none" stroke="#10069f" stroke-width="2"/><path d="M6.9 7.3 L11.6 2.6" stroke="#10069f" stroke-width="2.6"/><path d="M7.6 0 H14 V6.4Z" fill="#10069f"/></svg></div>
<div class="c" style="top:66.4px;left:303px;width:122px">2-5000-3000-3</div>
<div class="c" style="top:66.4px;left:430px;width:248px">Netpay Workstudy</div>
<div class="c" style="top:66.4px;left:679px;width:148px;text-align:right">1,000.00</div>
<div class="c" style="top:66.4px;left:836px;width:147px">Approved</div>
<div class="c" style="top:66.4px;left:1368px;width:249px"><a>Jenzabar J1 Admin&nbsp; </a><svg class="ext" width="14" height="14" viewBox="0 0 14 14"><path d="M6.4 2.9 H3 Q1 2.9 1 4.9 V11.1 Q1 13.1 3 13.1 H9.8 Q11.8 13.1 11.8 11.1 V7.6" fill="none" stroke="#10069f" stroke-width="2"/><path d="M6.9 7.3 L11.6 2.6" stroke="#10069f" stroke-width="2.6"/><path d="M7.6 0 H14 V6.4Z" fill="#10069f"/></svg></div>
<div class="c" style="top:66.4px;left:1622px;width:122px">1/31/2019</div>
<div class="rn" style="top:87.2px;width:46px">4</div>
<div class="c" style="top:87.2px;left:50px;width:248px"><a>Athletics Department&nbsp; </a><svg class="ext" width="14" height="14" viewBox="0 0 14 14"><path d="M6.4 2.9 H3 Q1 2.9 1 4.9 V11.1 Q1 13.1 3 13.1 H9.8 Q11.8 13.1 11.8 11.1 V7.6" fill="none" stroke="#10069f" stroke-width="2"/><path d="M6.9 7.3 L11.6 2.6" stroke="#10069f" stroke-width="2.6"/><path d="M7.6 0 H14 V6.4Z" fill="#10069f"/></svg></div>
<div class="c" style="top:87.2px;left:303px;width:122px">3-5000-2000-1</div>
<div class="c" style="top:87.2px;left:430px;width:248px">AP Expense Account 1</div>
<div class="c" style="top:87.2px;left:679px;width:148px;text-align:right">556.00</div>
<div class="c" style="top:87.2px;left:836px;width:147px">Approved</div>
<div class="c" style="top:87.2px;left:1368px;width:249px"><a>Jenzabar J1 Admin&nbsp; </a><svg class="ext" width="14" height="14" viewBox="0 0 14 14"><path d="M6.4 2.9 H3 Q1 2.9 1 4.9 V11.1 Q1 13.1 3 13.1 H9.8 Q11.8 13.1 11.8 11.1 V7.6" fill="none" stroke="#10069f" stroke-width="2"/><path d="M6.9 7.3 L11.6 2.6" stroke="#10069f" stroke-width="2.6"/><path d="M7.6 0 H14 V6.4Z" fill="#10069f"/></svg></div>
<div class="c" style="top:87.2px;left:1622px;width:122px">1/31/2019</div>
<div class="rn" style="top:108.0px;width:46px">5</div>
<div class="c" style="top:108.0px;left:50px;width:248px"><a>Football&nbsp; </a><svg class="ext" width="14" height="14" viewBox="0 0 14 14"><path d="M6.4 2.9 H3 Q1 2.9 1 4.9 V11.1 Q1 13.1 3 13.1 H9.8 Q11.8 13.1 11.8 11.1 V7.6" fill="none" stroke="#10069f" stroke-width="2"/><path d="M6.9 7.3 L11.6 2.6" stroke="#10069f" stroke-width="2.6"/><path d="M7.6 0 H14 V6.4Z" fill="#10069f"/></svg></div>
<div class="c" style="top:108.0px;left:303px;width:122px">1-5000-1140-2</div>
<div class="c" style="top:108.0px;left:430px;width:248px">Chemistry Dept - Utilities</div>
<div class="c" style="top:108.0px;left:679px;width:148px;text-align:right">1,949.80</div>
<div class="c" style="top:108.0px;left:836px;width:147px">Approved</div>
<div class="c" style="top:108.0px;left:1368px;width:249px"><a>Jenzabar J1 Admin&nbsp; </a><svg class="ext" width="14" height="14" viewBox="0 0 14 14"><path d="M6.4 2.9 H3 Q1 2.9 1 4.9 V11.1 Q1 13.1 3 13.1 H9.8 Q11.8 13.1 11.8 11.1 V7.6" fill="none" stroke="#10069f" stroke-width="2"/><path d="M6.9 7.3 L11.6 2.6" stroke="#10069f" stroke-width="2.6"/><path d="M7.6 0 H14 V6.4Z" fill="#10069f"/></svg></div>
<div class="c" style="top:108.0px;left:1622px;width:122px">1/31/2019</div>
<div class="rn" style="top:128.8px;width:46px">6</div>
<div class="c" style="top:128.8px;left:50px;width:248px"><a>Football&nbsp; </a><svg class="ext" width="14" height="14" viewBox="0 0 14 14"><path d="M6.4 2.9 H3 Q1 2.9 1 4.9 V11.1 Q1 13.1 3 13.1 H9.8 Q11.8 13.1 11.8 11.1 V7.6" fill="none" stroke="#10069f" stroke-width="2"/><path d="M6.9 7.3 L11.6 2.6" stroke="#10069f" stroke-width="2.6"/><path d="M7.6 0 H14 V6.4Z" fill="#10069f"/></svg></div>
<div class="c" style="top:128.8px;left:303px;width:122px">1-5000-1140-8</div>
<div class="c" style="top:128.8px;left:430px;width:248px">Chemistry Dept - Budget Test Acct 2</div>
<div class="c" style="top:128.8px;left:679px;width:148px;text-align:right">2,184.50</div>
<div class="c" style="top:128.8px;left:836px;width:147px">Approved</div>
<div class="c" style="top:128.8px;left:1368px;width:249px"><a>Jenzabar J1 Admin&nbsp; </a><svg class="ext" width="14" height="14" viewBox="0 0 14 14"><path d="M6.4 2.9 H3 Q1 2.9 1 4.9 V11.1 Q1 13.1 3 13.1 H9.8 Q11.8 13.1 11.8 11.1 V7.6" fill="none" stroke="#10069f" stroke-width="2"/><path d="M6.9 7.3 L11.6 2.6" stroke="#10069f" stroke-width="2.6"/><path d="M7.6 0 H14 V6.4Z" fill="#10069f"/></svg></div>
<div class="c" style="top:128.8px;left:1622px;width:122px">1/31/2019</div>
<div class="rn" style="top:149.6px;width:46px">7</div>
<div class="c" style="top:149.6px;left:50px;width:248px"><a>Football&nbsp; </a><svg class="ext" width="14" height="14" viewBox="0 0 14 14"><path d="M6.4 2.9 H3 Q1 2.9 1 4.9 V11.1 Q1 13.1 3 13.1 H9.8 Q11.8 13.1 11.8 11.1 V7.6" fill="none" stroke="#10069f" stroke-width="2"/><path d="M6.9 7.3 L11.6 2.6" stroke="#10069f" stroke-width="2.6"/><path d="M7.6 0 H14 V6.4Z" fill="#10069f"/></svg></div>
<div class="c" style="top:149.6px;left:303px;width:122px">2-5000-3000-5</div>
<div class="c" style="top:149.6px;left:430px;width:248px">Workstudy Account</div>
<div class="c" style="top:149.6px;left:679px;width:148px;text-align:right">500,000.00</div>
<div class="c" style="top:149.6px;left:836px;width:147px">Approved</div>
<div class="c" style="top:149.6px;left:1368px;width:249px"><a>Jenzabar J1 Admin&nbsp; </a><svg class="ext" width="14" height="14" viewBox="0 0 14 14"><path d="M6.4 2.9 H3 Q1 2.9 1 4.9 V11.1 Q1 13.1 3 13.1 H9.8 Q11.8 13.1 11.8 11.1 V7.6" fill="none" stroke="#10069f" stroke-width="2"/><path d="M6.9 7.3 L11.6 2.6" stroke="#10069f" stroke-width="2.6"/><path d="M7.6 0 H14 V6.4Z" fill="#10069f"/></svg></div>
<div class="c" style="top:149.6px;left:1622px;width:122px">1/31/2019</div>
<div class="rn" style="top:170.4px;width:46px">8</div>
<div class="c" style="top:170.4px;left:50px;width:248px"><a>Travel&nbsp; </a><svg class="ext" width="14" height="14" viewBox="0 0 14 14"><path d="M6.4 2.9 H3 Q1 2.9 1 4.9 V11.1 Q1 13.1 3 13.1 H9.8 Q11.8 13.1 11.8 11.1 V7.6" fill="none" stroke="#10069f" stroke-width="2"/><path d="M6.9 7.3 L11.6 2.6" stroke="#10069f" stroke-width="2.6"/><path d="M7.6 0 H14 V6.4Z" fill="#10069f"/></svg></div>
<div class="c" style="top:170.4px;left:303px;width:122px">2-5000-2000-5</div>
<div class="c" style="top:170.4px;left:430px;width:248px">AP Expense Account 5</div>
<div class="c" style="top:170.4px;left:679px;width:148px;text-align:right">10,000.00</div>
<div class="c" style="top:170.4px;left:836px;width:147px">Approved</div>
<div class="c" style="top:170.4px;left:1368px;width:249px"><a>Jenzabar J1 Admin&nbsp; </a><svg class="ext" width="14" height="14" viewBox="0 0 14 14"><path d="M6.4 2.9 H3 Q1 2.9 1 4.9 V11.1 Q1 13.1 3 13.1 H9.8 Q11.8 13.1 11.8 11.1 V7.6" fill="none" stroke="#10069f" stroke-width="2"/><path d="M6.9 7.3 L11.6 2.6" stroke="#10069f" stroke-width="2.6"/><path d="M7.6 0 H14 V6.4Z" fill="#10069f"/></svg></div>
<div class="c" style="top:170.4px;left:1622px;width:122px">1/31/2019</div>
<div class="rn" style="top:191.2px;width:46px">9</div>
<div class="c" style="top:191.2px;left:50px;width:248px"><a>Travel&nbsp; </a><svg class="ext" width="14" height="14" viewBox="0 0 14 14"><path d="M6.4 2.9 H3 Q1 2.9 1 4.9 V11.1 Q1 13.1 3 13.1 H9.8 Q11.8 13.1 11.8 11.1 V7.6" fill="none" stroke="#10069f" stroke-width="2"/><path d="M6.9 7.3 L11.6 2.6" stroke="#10069f" stroke-width="2.6"/><path d="M7.6 0 H14 V6.4Z" fill="#10069f"/></svg></div>
<div class="c" style="top:191.2px;left:303px;width:122px">2-5000-4000-1</div>
<div class="c" style="top:191.2px;left:430px;width:248px">Grosspay Salary</div>
<div class="c" style="top:191.2px;left:679px;width:148px;text-align:right">360,000.00</div>
<div class="c" style="top:191.2px;left:836px;width:147px">Approved</div>
<div class="c" style="top:191.2px;left:1368px;width:249px"><a>Jenzabar J1 Admin&nbsp; </a><svg class="ext" width="14" height="14" viewBox="0 0 14 14"><path d="M6.4 2.9 H3 Q1 2.9 1 4.9 V11.1 Q1 13.1 3 13.1 H9.8 Q11.8 13.1 11.8 11.1 V7.6" fill="none" stroke="#10069f" stroke-width="2"/><path d="M6.9 7.3 L11.6 2.6" stroke="#10069f" stroke-width="2.6"/><path d="M7.6 0 H14 V6.4Z" fill="#10069f"/></svg></div>
<div class="c" style="top:191.2px;left:1622px;width:122px">1/31/2019</div>
<div class="rn" style="top:212.0px;width:46px">10</div>
<div class="c" style="top:212.0px;left:50px;width:248px"><a>Equipment&nbsp; </a><svg class="ext" width="14" height="14" viewBox="0 0 14 14"><path d="M6.4 2.9 H3 Q1 2.9 1 4.9 V11.1 Q1 13.1 3 13.1 H9.8 Q11.8 13.1 11.8 11.1 V7.6" fill="none" stroke="#10069f" stroke-width="2"/><path d="M6.9 7.3 L11.6 2.6" stroke="#10069f" stroke-width="2.6"/><path d="M7.6 0 H14 V6.4Z" fill="#10069f"/></svg></div>
<div class="c" style="top:212.0px;left:303px;width:122px">1-5000-1140-6</div>
<div class="c" style="top:212.0px;left:430px;width:248px">Chemistry Dept - Inventory</div>
<div class="c" style="top:212.0px;left:679px;width:148px;text-align:right">1,011.00</div>
<div class="c" style="top:212.0px;left:836px;width:147px">Approved</div>
<div class="c" style="top:212.0px;left:1368px;width:249px"><a>Jenzabar J1 Admin&nbsp; </a><svg class="ext" width="14" height="14" viewBox="0 0 14 14"><path d="M6.4 2.9 H3 Q1 2.9 1 4.9 V11.1 Q1 13.1 3 13.1 H9.8 Q11.8 13.1 11.8 11.1 V7.6" fill="none" stroke="#10069f" stroke-width="2"/><path d="M6.9 7.3 L11.6 2.6" stroke="#10069f" stroke-width="2.6"/><path d="M7.6 0 H14 V6.4Z" fill="#10069f"/></svg></div>
<div class="c" style="top:212.0px;left:1622px;width:122px">1/31/2019</div>
<div class="rn" style="top:232.8px;width:46px">11</div>
<div class="c" style="top:232.8px;left:50px;width:248px"><a>Equipment&nbsp; </a><svg class="ext" width="14" height="14" viewBox="0 0 14 14"><path d="M6.4 2.9 H3 Q1 2.9 1 4.9 V11.1 Q1 13.1 3 13.1 H9.8 Q11.8 13.1 11.8 11.1 V7.6" fill="none" stroke="#10069f" stroke-width="2"/><path d="M6.9 7.3 L11.6 2.6" stroke="#10069f" stroke-width="2.6"/><path d="M7.6 0 H14 V6.4Z" fill="#10069f"/></svg></div>
<div class="c" style="top:232.8px;left:303px;width:122px">2-5000-1000-3</div>
<div class="c" style="top:232.8px;left:430px;width:248px">FICA Benefit Expense</div>
<div class="c" style="top:232.8px;left:679px;width:148px;text-align:right">1,245.70</div>
<div class="c" style="top:232.8px;left:836px;width:147px">Approved</div>
<div class="c" style="top:232.8px;left:1368px;width:249px"><a>Jenzabar J1 Admin&nbsp; </a><svg class="ext" width="14" height="14" viewBox="0 0 14 14"><path d="M6.4 2.9 H3 Q1 2.9 1 4.9 V11.1 Q1 13.1 3 13.1 H9.8 Q11.8 13.1 11.8 11.1 V7.6" fill="none" stroke="#10069f" stroke-width="2"/><path d="M6.9 7.3 L11.6 2.6" stroke="#10069f" stroke-width="2.6"/><path d="M7.6 0 H14 V6.4Z" fill="#10069f"/></svg></div>
<div class="c" style="top:232.8px;left:1622px;width:122px">1/31/2019</div>
<div class="rn" style="top:253.6px;width:46px">12</div>
<div class="c" style="top:253.6px;left:50px;width:248px"><a>Equipment&nbsp; </a><svg class="ext" width="14" height="14" viewBox="0 0 14 14"><path d="M6.4 2.9 H3 Q1 2.9 1 4.9 V11.1 Q1 13.1 3 13.1 H9.8 Q11.8 13.1 11.8 11.1 V7.6" fill="none" stroke="#10069f" stroke-width="2"/><path d="M6.9 7.3 L11.6 2.6" stroke="#10069f" stroke-width="2.6"/><path d="M7.6 0 H14 V6.4Z" fill="#10069f"/></svg></div>
<div class="c" style="top:253.6px;left:303px;width:122px">2-5000-1000-6</div>
<div class="c" style="top:253.6px;left:430px;width:248px">Hourly Expense</div>
<div class="c" style="top:253.6px;left:679px;width:148px;text-align:right">1,480.40</div>
<div class="c" style="top:253.6px;left:836px;width:147px">Approved</div>
<div class="c" style="top:253.6px;left:1368px;width:249px"><a>Jenzabar J1 Admin&nbsp; </a><svg class="ext" width="14" height="14" viewBox="0 0 14 14"><path d="M6.4 2.9 H3 Q1 2.9 1 4.9 V11.1 Q1 13.1 3 13.1 H9.8 Q11.8 13.1 11.8 11.1 V7.6" fill="none" stroke="#10069f" stroke-width="2"/><path d="M6.9 7.3 L11.6 2.6" stroke="#10069f" stroke-width="2.6"/><path d="M7.6 0 H14 V6.4Z" fill="#10069f"/></svg></div>
<div class="c" style="top:253.6px;left:1622px;width:122px">1/31/2019</div>
<div class="rn" style="top:274.4px;width:46px">13</div>
<div class="c" style="top:274.4px;left:50px;width:248px"><a>Equipment&nbsp; </a><svg class="ext" width="14" height="14" viewBox="0 0 14 14"><path d="M6.4 2.9 H3 Q1 2.9 1 4.9 V11.1 Q1 13.1 3 13.1 H9.8 Q11.8 13.1 11.8 11.1 V7.6" fill="none" stroke="#10069f" stroke-width="2"/><path d="M6.9 7.3 L11.6 2.6" stroke="#10069f" stroke-width="2.6"/><path d="M7.6 0 H14 V6.4Z" fill="#10069f"/></svg></div>
<div class="c" style="top:274.4px;left:303px;width:122px">2-5000-1000-7</div>
<div class="c" style="top:274.4px;left:430px;width:248px">Workstudy Expense</div>
<div class="c" style="top:274.4px;left:679px;width:148px;text-align:right">1,715.10</div>
<div class="c" style="top:274.4px;left:836px;width:147px">Approved</div>
<div class="c" style="top:274.4px;left:1368px;width:249px"><a>Jenzabar J1 Admin&nbsp; </a><svg class="ext" width="14" height="14" viewBox="0 0 14 14"><path d="M6.4 2.9 H3 Q1 2.9 1 4.9 V11.1 Q1 13.1 3 13.1 H9.8 Q11.8 13.1 11.8 11.1 V7.6" fill="none" stroke="#10069f" stroke-width="2"/><path d="M6.9 7.3 L11.6 2.6" stroke="#10069f" stroke-width="2.6"/><path d="M7.6 0 H14 V6.4Z" fill="#10069f"/></svg></div>
<div class="c" style="top:274.4px;left:1622px;width:122px">1/31/2019</div>
<div class="rn" style="top:295.2px;width:46px">14</div>
<div class="c" style="top:295.2px;left:50px;width:248px"><a>Kyle Test&nbsp; </a><svg class="ext" width="14" height="14" viewBox="0 0 14 14"><path d="M6.4 2.9 H3 Q1 2.9 1 4.9 V11.1 Q1 13.1 3 13.1 H9.8 Q11.8 13.1 11.8 11.1 V7.6" fill="none" stroke="#10069f" stroke-width="2"/><path d="M6.9 7.3 L11.6 2.6" stroke="#10069f" stroke-width="2.6"/><path d="M7.6 0 H14 V6.4Z" fill="#10069f"/></svg></div>
<div class="c" style="top:295.2px;left:303px;width:122px">2-5000-1000-9</div>
<div class="c" style="top:295.2px;left:430px;width:248px">O Assets</div>
<div class="c" style="top:295.2px;left:679px;width:148px;text-align:right">0.00</div>
<div class="c" style="top:295.2px;left:836px;width:147px">Under Preparation</div>
<div class="rn" style="top:316.0px;width:46px">15</div>
<div class="c" style="top:316.0px;left:50px;width:248px"><a>Accts Recv&nbsp; </a><svg class="ext" width="14" height="14" viewBox="0 0 14 14"><path d="M6.4 2.9 H3 Q1 2.9 1 4.9 V11.1 Q1 13.1 3 13.1 H9.8 Q11.8 13.1 11.8 11.1 V7.6" fill="none" stroke="#10069f" stroke-width="2"/><path d="M6.9 7.3 L11.6 2.6" stroke="#10069f" stroke-width="2.6"/><path d="M7.6 0 H14 V6.4Z" fill="#10069f"/></svg></div>
<div class="c" style="top:316.0px;left:303px;width:122px">1-1000-1040-?</div>
<div class="c" style="top:316.0px;left:430px;width:248px">Accounts Receivable</div>
<div class="c" style="top:316.0px;left:679px;width:148px;text-align:right">45,579.60</div>
<div class="c" style="top:316.0px;left:836px;width:147px">Approved</div>
<div class="c" style="top:316.0px;left:1368px;width:249px"><a>Jenzabar J1 Admin&nbsp; </a><svg class="ext" width="14" height="14" viewBox="0 0 14 14"><path d="M6.4 2.9 H3 Q1 2.9 1 4.9 V11.1 Q1 13.1 3 13.1 H9.8 Q11.8 13.1 11.8 11.1 V7.6" fill="none" stroke="#10069f" stroke-width="2"/><path d="M6.9 7.3 L11.6 2.6" stroke="#10069f" stroke-width="2.6"/><path d="M7.6 0 H14 V6.4Z" fill="#10069f"/></svg></div>
<div class="c" style="top:316.0px;left:1622px;width:122px">9/12/2019</div>
<div class="rn" style="top:336.8px;width:46px">16</div>
<div class="c" style="top:336.8px;left:50px;width:248px"><a>Land, Building, etc&nbsp; </a><svg class="ext" width="14" height="14" viewBox="0 0 14 14"><path d="M6.4 2.9 H3 Q1 2.9 1 4.9 V11.1 Q1 13.1 3 13.1 H9.8 Q11.8 13.1 11.8 11.1 V7.6" fill="none" stroke="#10069f" stroke-width="2"/><path d="M6.9 7.3 L11.6 2.6" stroke="#10069f" stroke-width="2.6"/><path d="M7.6 0 H14 V6.4Z" fill="#10069f"/></svg></div>
<div class="c" style="top:336.8px;left:303px;width:122px">1-1000-1010-1</div>
<div class="c" style="top:336.8px;left:430px;width:248px">Land</div>
<div class="c" style="top:336.8px;left:679px;width:148px;text-align:right">124,785.60</div>
<div class="c" style="top:336.8px;left:836px;width:147px">Approved</div>
<div class="c" style="top:336.8px;left:1368px;width:249px"><a>Jenzabar J1 Admin&nbsp; </a><svg class="ext" width="14" height="14" viewBox="0 0 14 14"><path d="M6.4 2.9 H3 Q1 2.9 1 4.9 V11.1 Q1 13.1 3 13.1 H9.8 Q11.8 13.1 11.8 11.1 V7.6" fill="none" stroke="#10069f" stroke-width="2"/><path d="M6.9 7.3 L11.6 2.6" stroke="#10069f" stroke-width="2.6"/><path d="M7.6 0 H14 V6.4Z" fill="#10069f"/></svg></div>
<div class="c" style="top:336.8px;left:1622px;width:122px">9/12/2019</div>
<div class="rn" style="top:357.6px;width:46px"></div>
<div class="c" style="top:357.6px;left:50px;width:248px"><a>Land, Building, etc&nbsp; </a><svg class="ext" width="14" height="14" viewBox="0 0 14 14"><path d="M6.4 2.9 H3 Q1 2.9 1 4.9 V11.1 Q1 13.1 3 13.1 H9.8 Q11.8 13.1 11.8 11.1 V7.6" fill="none" stroke="#10069f" stroke-width="2"/><path d="M6.9 7.3 L11.6 2.6" stroke="#10069f" stroke-width="2.6"/><path d="M7.6 0 H14 V6.4Z" fill="#10069f"/></svg></div>
<div class="c" style="top:357.6px;left:303px;width:122px">1-1000-1010-2</div>
<div class="c" style="top:357.6px;left:430px;width:248px">Buildings</div>
<div class="c" style="top:357.6px;left:679px;width:148px;text-align:right">0.00</div>
<div class="c" style="top:357.6px;left:836px;width:147px">Approved</div>
<div class="c" style="top:357.6px;left:1368px;width:249px"><a>Jenzabar J1 Admin&nbsp; </a><svg class="ext" width="14" height="14" viewBox="0 0 14 14"><path d="M6.4 2.9 H3 Q1 2.9 1 4.9 V11.1 Q1 13.1 3 13.1 H9.8 Q11.8 13.1 11.8 11.1 V7.6" fill="none" stroke="#10069f" stroke-width="2"/><path d="M6.9 7.3 L11.6 2.6" stroke="#10069f" stroke-width="2.6"/><path d="M7.6 0 H14 V6.4Z" fill="#10069f"/></svg></div>
<div class="c" style="top:357.6px;left:1622px;width:122px">9/12/2019</div>
<div class="sb" style="left:1745px;width:22px"></div>
<svg style="position:absolute;left:1751px;top:7px" width="10" height="6" viewBox="0 0 10 6"><path d="M0 6 L5 0.5 L10 6Z" fill="#a0a0a0"/></svg>
<div style="position:absolute;left:1748px;top:19px;width:15px;height:20px;background:#c1c1c1"></div>
<svg style="position:absolute;left:1751px;top:345px" width="10" height="6" viewBox="0 0 10 6"><path d="M0 0 L10 0 L5 5.5Z" fill="#505050"/></svg>
</div>
<!--/TABLE2-->

<!-- FOOTER -->
<div class="abs" style="left:27px;top:1884px;color:#555;white-space:nowrap;letter-spacing:0.15px">© 2024 Jenzabar, Inc.</div>
<div class="abs" style="left:178px;top:1884px;color:#555;white-space:nowrap;letter-spacing:0.22px">2023.3.0 | Database DEV_2023_3</div>
<div class="abs" style="left:412px;top:1884px;white-space:nowrap;letter-spacing:0.2px"><a style="color:#10069f;text-decoration:underline">Show Technical Documentation Link(s)</a></div>

</body></html>
